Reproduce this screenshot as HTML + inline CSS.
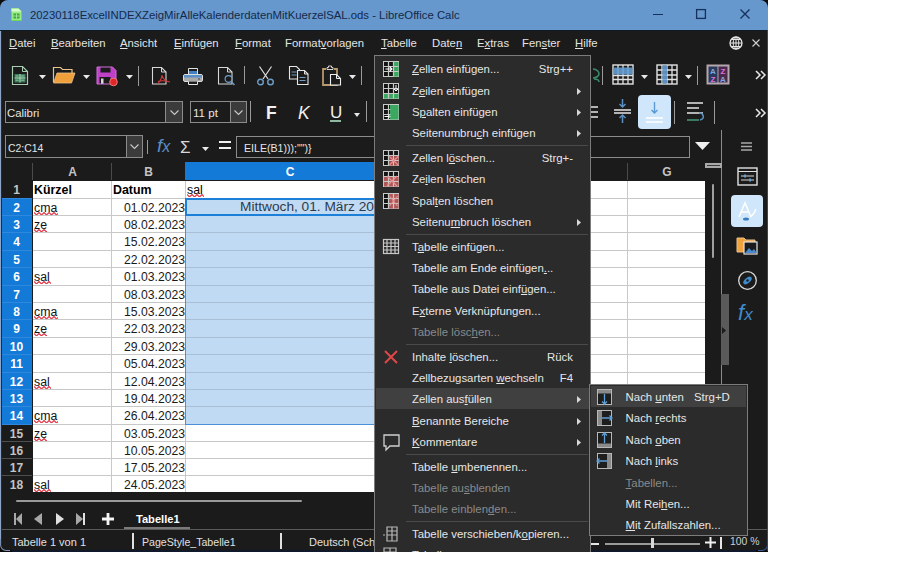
<!DOCTYPE html>
<html><head><meta charset="utf-8">
<style>
*{margin:0;padding:0;box-sizing:border-box}
html,body{width:915px;height:579px;overflow:hidden;background:#fff;font-family:"Liberation Sans",sans-serif}
.a{position:absolute}
svg.a{overflow:visible}
#win{position:absolute;left:0;top:0;width:768px;height:552px;background:#1b1b1b;overflow:hidden;border-radius:8px 8px 0 0}
.t{position:absolute;white-space:nowrap;line-height:14px}
.u{text-decoration:underline;text-underline-offset:0.5px;text-decoration-thickness:1px}
</style></head><body>

<div class="a" style="left:0px;top:0px;width:12px;height:12px;background:#0c0c0c;"></div>
<div class="a" style="left:756px;top:0px;width:12px;height:12px;background:#0c0c0c;"></div>
<div id="win">
<div class="a" style="left:0px;top:0px;width:768px;height:30px;background:#6697cd;"></div>
<svg class="a" style="left:11px;top:8px;" width="11" height="13" viewBox="0 0 11 13"><path d="M0.5 0.5h7l3 3v9h-10z" fill="#98ee84" stroke="#6ad858" stroke-width="1"/><path d="M0.5 0.5h7l3 3h-10z" fill="#d8fbd0"/><rect x="2.5" y="5.5" width="6" height="5" fill="#3aa83a"/><path d="M2.5 8h6M5.5 5.5v5" stroke="#b8f0a8" stroke-width="0.8"/></svg>
<div class="t" style="left:30px;top:8px;font-size:11.35px;color:#142a4a;">20230118ExcelINDEXZeigMirAlleKalenderdatenMitKuerzelSAL.ods - LibreOffice Calc</div>
<div class="a" style="left:653px;top:14px;width:10px;height:1.3px;background:#15305a;"></div>
<svg class="a" style="left:696px;top:9px;" width="10" height="10" viewBox="0 0 10 10"><rect x="0.6" y="0.6" width="8.8" height="8.8" fill="none" stroke="#15305a" stroke-width="1.3"/></svg>
<svg class="a" style="left:740px;top:9px;" width="10" height="10" viewBox="0 0 10 10"><path d="M0.5 0.5L9.5 9.5M9.5 0.5L0.5 9.5" stroke="#15305a" stroke-width="1.3"/></svg>
<div class="t" style="left:9px;top:36px;font-size:11.3px;color:#e4e4e4;"><span class="u">D</span>atei</div>
<div class="t" style="left:51px;top:36px;font-size:11.3px;color:#e4e4e4;"><span class="u">B</span>earbeiten</div>
<div class="t" style="left:120px;top:36px;font-size:11.3px;color:#e4e4e4;"><span class="u">A</span>nsicht</div>
<div class="t" style="left:174px;top:36px;font-size:11.3px;color:#e4e4e4;"><span class="u">E</span>infügen</div>
<div class="t" style="left:235px;top:36px;font-size:11.3px;color:#e4e4e4;"><span class="u">F</span>ormat</div>
<div class="t" style="left:285px;top:36px;font-size:11.3px;color:#e4e4e4;">Format<span class="u">v</span>orlagen</div>
<div class="t" style="left:381px;top:36px;font-size:11.3px;color:#e4e4e4;"><span class="u">T</span>abelle</div>
<div class="t" style="left:432px;top:36px;font-size:11.3px;color:#e4e4e4;">Date<span class="u">n</span></div>
<div class="t" style="left:477px;top:36px;font-size:11.3px;color:#e4e4e4;">E<span class="u">x</span>tras</div>
<div class="t" style="left:522px;top:36px;font-size:11.3px;color:#e4e4e4;">Fen<span class="u">s</span>ter</div>
<div class="t" style="left:575px;top:36px;font-size:11.3px;color:#e4e4e4;"><span class="u">H</span>ilfe</div>
<svg class="a" style="left:729px;top:36px;" width="14" height="14" viewBox="0 0 14 14"><circle cx="7" cy="7" r="6" fill="none" stroke="#e8e8e8" stroke-width="1.3"/><path d="M1 7h12M7 1v12M3 3.5h8M3 10.5h8" stroke="#e8e8e8" stroke-width="1"/><ellipse cx="7" cy="7" rx="2.8" ry="6" fill="none" stroke="#e8e8e8" stroke-width="1"/></svg>
<svg class="a" style="left:752px;top:39px;" width="8" height="8" viewBox="0 0 8 8"><path d="M0.5 0.5L7.5 7.5M7.5 0.5L0.5 7.5" stroke="#d0d0d0" stroke-width="1.1"/></svg>
<svg class="a" style="left:11px;top:65px;" width="18" height="21" viewBox="0 0 18 21"><path d="M1.5 1.5h10l5 5v13h-15z" fill="#1b1b1b" stroke="#a9cdb2" stroke-width="1.2"/><path d="M11.5 1.5v5h5" fill="none" stroke="#a9cdb2" stroke-width="1"/><rect x="3.5" y="9" width="11" height="8.5" fill="#3f7a5a"/><path d="M3.5 13h11M9 9v8.5" stroke="#a9d8b8" stroke-width="1.1"/><path d="M4.5 11h3M10 11h3.5M4.5 15.2h3M10 15.2h3.5" stroke="#8cc8a0" stroke-width="1"/></svg>
<svg class="a" style="left:39px;top:75px;" width="7" height="4" viewBox="0 0 7 4"><path d="M0 0h7l-3.5 4z" fill="#e8e8e8"/></svg>
<svg class="a" style="left:52px;top:66px;" width="24" height="18" viewBox="0 0 24 18"><path d="M1.5 16V1.5h7l2 2h9.5v4" fill="#1b1b1b" stroke="#e8c48a" stroke-width="1.2"/><path d="M1.5 17l3.5-10h18l-3.5 10z" fill="#f0a03a" stroke="#e9c08a" stroke-width="0.8"/></svg>
<svg class="a" style="left:83px;top:75px;" width="7" height="4" viewBox="0 0 7 4"><path d="M0 0h7l-3.5 4z" fill="#e8e8e8"/></svg>
<svg class="a" style="left:96px;top:66px;" width="23" height="20" viewBox="0 0 23 20"><path d="M1 1h15.5l3.5 3.5V18H1z" fill="#c040c8"/><rect x="4.5" y="1" width="10" height="5.5" fill="#1b1b1b"/><rect x="3.5" y="11" width="11" height="7" fill="#1b1b1b"/><rect x="5" y="12.5" width="2.5" height="5.5" fill="#d8d8d8"/><path d="M1 1h15.5l3.5 3.5V18H1z" fill="none" stroke="#d070d8" stroke-width="1"/><circle cx="17.5" cy="16" r="3.8" fill="#e02626" stroke="#f07a7a" stroke-width="1"/></svg>
<svg class="a" style="left:126px;top:75px;" width="7" height="4" viewBox="0 0 7 4"><path d="M0 0h7l-3.5 4z" fill="#e8e8e8"/></svg>
<div class="a" style="left:138px;top:66px;width:1px;height:20px;background:#9a9a9a;"></div>
<svg class="a" style="left:151px;top:66px;" width="21" height="19" viewBox="0 0 21 19"><path d="M1.5 1.5h9l4.5 4.5v12H1.5z" fill="none" stroke="#d8d8d8" stroke-width="1.1"/><path d="M10.5 1.5v4.5H15" fill="none" stroke="#d8d8d8" stroke-width="1"/><path d="M11 9c0 3-2 6-4 8.5M11 9c0.5 3 3 6 8 7M7 15.5c3-1 7-1 12 0.5" fill="none" stroke="#d03a3a" stroke-width="1.1"/></svg>
<svg class="a" style="left:182px;top:67px;" width="22" height="18" viewBox="0 0 22 18"><path d="M6.5 1.5h9v6h-9z" fill="#1b1b1b" stroke="#e0e0e0" stroke-width="1"/><rect x="7" y="4" width="8" height="4" fill="#3f7fc4"/><rect x="1.5" y="7.5" width="19" height="7" rx="1.5" fill="#a9a9a9" stroke="#dedede" stroke-width="1"/><rect x="2" y="8" width="18" height="2.5" fill="#5a90c8"/><path d="M6.5 14.5v3h9v-3" fill="#1b1b1b" stroke="#e6e6e6" stroke-width="1"/><rect x="16" y="11.5" width="2" height="1" fill="#404040"/></svg>
<svg class="a" style="left:217px;top:66px;" width="20" height="20" viewBox="0 0 20 20"><path d="M1.5 1.5h9l4.5 4.5v12H1.5z" fill="none" stroke="#d8d8d8" stroke-width="1.1"/><path d="M10.5 1.5v4.5H15" fill="none" stroke="#d8d8d8" stroke-width="1"/><circle cx="11.5" cy="13" r="3.4" fill="#1b1b1b" stroke="#6f9cc8" stroke-width="1.2"/><path d="M14 15.5l3.5 3.5" stroke="#6f9cc8" stroke-width="1.5"/></svg>
<div class="a" style="left:244px;top:66px;width:1px;height:18px;background:#9a9a9a;"></div>
<svg class="a" style="left:256px;top:66px;" width="20" height="20" viewBox="0 0 20 20"><path d="M3.5 0.5l8.5 12.5M15.5 0.5l-8.5 12.5" stroke="#e0e0e0" stroke-width="1.2"/><circle cx="4.5" cy="16" r="2.8" fill="none" stroke="#6e9ec8" stroke-width="1.4"/><circle cx="14.5" cy="16" r="2.8" fill="none" stroke="#6e9ec8" stroke-width="1.4"/></svg>
<svg class="a" style="left:288px;top:65px;" width="22" height="20" viewBox="0 0 22 20"><path d="M1.5 1.5h7l3 3v9.5h-10z" fill="#1b1b1b" stroke="#e6e6e6" stroke-width="1.1"/><path d="M3.5 7h5M3.5 10h5" stroke="#6e9ec8" stroke-width="1"/><path d="M9.5 5.5h7l3.5 3.5v10.5H9.5z" fill="#1b1b1b" stroke="#e6e6e6" stroke-width="1.1"/><path d="M16.5 5.5V9H20" fill="none" stroke="#e6e6e6" stroke-width="1"/><path d="M11.5 12.5h6M11.5 15.5h6" stroke="#6e9ec8" stroke-width="1"/></svg>
<svg class="a" style="left:321px;top:65px;" width="22" height="21" viewBox="0 0 22 21"><path d="M5 4H2v16h14V4h-3" fill="none" stroke="#b8986c" stroke-width="1.8"/><path d="M6 4.5h6V2.5H10.5V1h-3v1.5H6z" fill="#1b1b1b" stroke="#e6e6e6" stroke-width="0.9"/><path d="M9.5 9.5h6l4 4v6.5h-10z" fill="#1b1b1b" stroke="#eeeeee" stroke-width="1.1"/><path d="M15.5 9.5v4h4" fill="none" stroke="#eeeeee" stroke-width="1"/></svg>
<svg class="a" style="left:349px;top:75px;" width="7" height="4" viewBox="0 0 7 4"><path d="M0 0h7l-3.5 4z" fill="#e8e8e8"/></svg>
<div class="a" style="left:361px;top:66px;width:1px;height:19px;background:#9a9a9a;"></div>
<svg class="a" style="left:591px;top:66px;" width="10" height="18" viewBox="0 0 10 18"><path d="M2 3c4 0 6 3 6 5s-3 4-6 4" fill="none" stroke="#3a8a6a" stroke-width="1.6"/><path d="M3 13c3 0 5 1 5 3" fill="none" stroke="#3a8a6a" stroke-width="1.6"/></svg>
<div class="a" style="left:602px;top:66px;width:1px;height:19px;background:#9a9a9a;"></div>
<svg class="a" style="left:612px;top:64px;" width="22" height="21" viewBox="0 0 22 21"><rect x="1" y="1" width="20" height="19" fill="#1b1b1b" stroke="#e2e2e2" stroke-width="1.4"/><path d="M1 11.5h20M1 15.5h20M6 1v19M11 1v19M16 1v19" stroke="#e2e2e2" stroke-width="1.3"/><rect x="1.5" y="3.5" width="19" height="7" fill="#5b8fc2"/><path d="M6 3.5v7M11 3.5v7M16 3.5v7" stroke="#8db4da" stroke-width="0.8"/></svg>
<svg class="a" style="left:641px;top:75px;" width="7" height="4" viewBox="0 0 7 4"><path d="M0 0h7l-3.5 4z" fill="#e8e8e8"/></svg>
<svg class="a" style="left:656px;top:64px;" width="22" height="21" viewBox="0 0 22 21"><rect x="1" y="1" width="20" height="19" fill="#1b1b1b" stroke="#e2e2e2" stroke-width="1.4"/><path d="M1 6h20M1 11h20M1 15.5h20M6 1v19M11 1v19M16 1v19" stroke="#e2e2e2" stroke-width="1.3"/><rect x="6.5" y="1.5" width="4.5" height="18" fill="#5b8fc2"/><path d="M6.5 6h4.5M6.5 11h4.5M6.5 15.5h4.5" stroke="#8db4da" stroke-width="0.8"/></svg>
<svg class="a" style="left:685px;top:75px;" width="7" height="4" viewBox="0 0 7 4"><path d="M0 0h7l-3.5 4z" fill="#e8e8e8"/></svg>
<div class="a" style="left:697px;top:66px;width:1px;height:19px;background:#9a9a9a;"></div>
<svg class="a" style="left:706px;top:64px;" width="24" height="21" viewBox="0 0 24 21"><rect x="0.5" y="0.5" width="23" height="20" fill="#b6a7ae"/><rect x="2.5" y="2.5" width="9" height="16" fill="#2a3a5a"/><rect x="12.5" y="2.5" width="9" height="16" fill="#4a2a4a"/><text x="7" y="10" font-size="8" font-weight="bold" fill="#7aa8e0" text-anchor="middle" font-family="Liberation Sans">A</text><text x="7" y="18" font-size="8" font-weight="bold" fill="#e070e0" text-anchor="middle" font-family="Liberation Sans">Z</text><text x="17" y="10" font-size="8" font-weight="bold" fill="#e070e0" text-anchor="middle" font-family="Liberation Sans">Z</text><text x="17" y="18" font-size="8" font-weight="bold" fill="#7aa8e0" text-anchor="middle" font-family="Liberation Sans">A</text></svg>
<svg class="a" style="left:755px;top:70px;" width="12" height="10" viewBox="0 0 12 10"><path d="M1 1l4 4-4 4M6 1l4 4-4 4" fill="none" stroke="#e8e8e8" stroke-width="1.5"/></svg>
<div class="a" style="left:5px;top:101px;width:178px;height:22px;background:#1b1b1b;border:1.5px solid #8c8c8c"></div>
<div class="a" style="left:165px;top:102px;width:17px;height:20px;background:#3b3b3b;border-left:1px solid #8c8c8c"></div>
<svg class="a" style="left:169.5px;top:109.5px;" width="9" height="5" viewBox="0 0 9 5"><path d="M0.5 0.5l4 4 4-4" fill="none" stroke="#c8c8c8" stroke-width="1.1"/></svg>
<div class="t" style="left:7px;top:106.0px;font-size:11.4px;color:#e6e6e6;">Calibri</div>
<div class="a" style="left:190px;top:101px;width:57px;height:22px;background:#1b1b1b;border:1.5px solid #8c8c8c"></div>
<div class="a" style="left:230px;top:102px;width:16px;height:20px;background:#3b3b3b;border-left:1px solid #8c8c8c"></div>
<svg class="a" style="left:234.0px;top:109.5px;" width="9" height="5" viewBox="0 0 9 5"><path d="M0.5 0.5l4 4 4-4" fill="none" stroke="#c8c8c8" stroke-width="1.1"/></svg>
<div class="t" style="left:193px;top:105.5px;font-size:11.6px;color:#e6e6e6;">11 pt</div>
<div class="a" style="left:250px;top:101px;width:1px;height:21px;background:#9a9a9a;"></div>
<div class="t" style="left:266px;top:104px;font-size:17.5px;color:#f2f2f2;font-weight:bold;line-height:18px">F</div>
<div class="t" style="left:298px;top:104px;font-size:17.5px;color:#f2f2f2;line-height:18px;font-style:italic">K</div>
<div class="t" style="left:330px;top:104px;font-size:17px;color:#f2f2f2;line-height:18px">U</div>
<div class="a" style="left:330px;top:120px;width:11px;height:1.5px;background:#8fb8a0;"></div>
<svg class="a" style="left:354px;top:113px;" width="6" height="4" viewBox="0 0 6 4"><path d="M0 0h6l-3.0 4z" fill="#e8e8e8"/></svg>
<div class="a" style="left:366px;top:101px;width:1px;height:21px;background:#9a9a9a;"></div>
<svg class="a" style="left:586px;top:104px;" width="14" height="18" viewBox="0 0 14 18"><path d="M1 3h11M4 8h8M1 13h11" stroke="#e6e6e6" stroke-width="1.4"/></svg>
<svg class="a" style="left:613px;top:98px;" width="19" height="26" viewBox="0 0 19 26"><path d="M1 12h17M1 15h17" stroke="#e6e6e6" stroke-width="1.4"/><path d="M9.5 1v8M6.5 6l3 3 3-3M9.5 25v-8M6.5 20l3-3 3 3" fill="none" stroke="#5b8fc2" stroke-width="1.5"/></svg>
<div class="a" style="left:638px;top:95px;width:33px;height:34px;background:#cfe6fb;border-radius:4px"></div>
<svg class="a" style="left:638px;top:95px;" width="33" height="34" viewBox="0 0 33 34"><path d="M16.5 7v11M13.5 15l3 3 3-3" fill="none" stroke="#5b9ad4" stroke-width="1.4"/><path d="M8 23h17M8 27h17" stroke="#ffffff" stroke-width="1.4"/></svg>
<div class="a" style="left:674px;top:101px;width:1px;height:23px;background:#9a9a9a;"></div>
<svg class="a" style="left:686px;top:101px;" width="21" height="22" viewBox="0 0 21 22"><path d="M1 2h16M1 7h12M1 12h16" stroke="#e6e6e6" stroke-width="1.5"/><path d="M1 19h12" stroke="#4a9a7a" stroke-width="1.5"/><path d="M13 12c5 0 6 6 1 7" fill="none" stroke="#5b8fc2" stroke-width="1.5"/></svg>
<div class="a" style="left:714px;top:101px;width:1px;height:23px;background:#9a9a9a;"></div>
<svg class="a" style="left:755px;top:108px;" width="12" height="10" viewBox="0 0 12 10"><path d="M1 1l4 4-4 4M6 1l4 4-4 4" fill="none" stroke="#e8e8e8" stroke-width="1.5"/></svg>
<div class="a" style="left:5px;top:135px;width:138px;height:23px;background:#1b1b1b;border:1.5px solid #8c8c8c"></div>
<div class="a" style="left:126px;top:136px;width:16px;height:21px;background:#3b3b3b;border-left:1px solid #8c8c8c"></div>
<svg class="a" style="left:130.0px;top:144.0px;" width="9" height="5" viewBox="0 0 9 5"><path d="M0.5 0.5l4 4 4-4" fill="none" stroke="#c8c8c8" stroke-width="1.1"/></svg>
<div class="t" style="left:8px;top:141.5px;font-size:10.4px;color:#e6e6e6;">C2:C14</div>
<div class="a" style="left:147px;top:140px;width:1px;height:14px;background:#9a9a9a;"></div>
<div class="t" style="left:157px;top:139px;font-size:19px;color:#5b8fc4;font-family:"Liberation Serif",serif;line-height:20px"><i>f</i><i style="font-size:16px">x</i></div>
<div class="t" style="left:180px;top:141px;font-size:17px;color:#d8d8d8;font-family:"Liberation Serif",serif;line-height:20px">Σ</div>
<svg class="a" style="left:202px;top:147px;" width="7" height="4" viewBox="0 0 7 4"><path d="M0 0h7l-3.5 4z" fill="#e8e8e8"/></svg>
<div class="a" style="left:219px;top:141px;width:12px;height:2px;background:#f0f0f0;"></div>
<div class="a" style="left:219px;top:147px;width:12px;height:2px;background:#f0f0f0;"></div>
<div class="a" style="left:236px;top:136px;width:454px;height:22px;background:#1b1b1b;border:1.5px solid #8c8c8c"></div>
<div class="t" style="left:244px;top:141px;font-size:10.6px;color:#e6e6e6;">EILE(B1)));"")}</div>
<svg class="a" style="left:695px;top:142px;" width="15" height="8" viewBox="0 0 15 8"><path d="M0 0h15l-7.5 8z" fill="#f0f0f0"/></svg>
<div class="a" style="left:0px;top:162px;width:722px;height:18px;background:#1b1b1b;"></div>
<div class="a" style="left:185px;top:162px;width:212px;height:18px;background:#147ad8;"></div>
<div class="a" style="left:32px;top:163px;width:1px;height:17px;background:#4a4a4a;"></div>
<div class="a" style="left:111px;top:163px;width:1px;height:17px;background:#4a4a4a;"></div>
<div class="a" style="left:627px;top:163px;width:1px;height:17px;background:#4a4a4a;"></div>
<div class="t" style="left:52.5px;top:165px;width:40px;text-align:center;font-size:12px;color:#c4c4c4;font-weight:bold">A</div>
<div class="t" style="left:128.5px;top:165px;width:40px;text-align:center;font-size:12px;color:#c4c4c4;font-weight:bold">B</div>
<div class="t" style="left:647px;top:165px;width:40px;text-align:center;font-size:12px;color:#c4c4c4;font-weight:bold">G</div>
<div class="t" style="left:270px;top:165px;width:40px;text-align:center;font-size:12px;color:#ffffff;font-weight:bold">C</div>
<div class="a" style="left:33px;top:181px;width:672px;height:311px;background:#ffffff;"></div>
<div class="a" style="left:185px;top:199px;width:212px;height:226px;background:#c0daf3;"></div>
<div class="a" style="left:0px;top:181px;width:32px;height:18px;background:#1b1b1b;"></div>
<div class="t" style="left:0px;top:183px;width:33px;text-align:center;font-size:12px;color:#c4c4c4;font-weight:bold;">1</div>
<div class="a" style="left:0px;top:199px;width:32px;height:17px;background:#147ad8;"></div>
<div class="a" style="left:0px;top:198px;width:32px;height:1px;background:#2f88dc;"></div>
<div class="t" style="left:0px;top:201px;width:33px;text-align:center;font-size:12px;color:#ffffff;font-weight:bold;">2</div>
<div class="a" style="left:0px;top:216px;width:32px;height:17px;background:#147ad8;"></div>
<div class="a" style="left:0px;top:215px;width:32px;height:1px;background:#2f88dc;"></div>
<div class="t" style="left:0px;top:218px;width:33px;text-align:center;font-size:12px;color:#ffffff;font-weight:bold;">3</div>
<div class="a" style="left:0px;top:233px;width:32px;height:18px;background:#147ad8;"></div>
<div class="a" style="left:0px;top:232px;width:32px;height:1px;background:#2f88dc;"></div>
<div class="t" style="left:0px;top:235px;width:33px;text-align:center;font-size:12px;color:#ffffff;font-weight:bold;">4</div>
<div class="a" style="left:0px;top:251px;width:32px;height:17px;background:#147ad8;"></div>
<div class="a" style="left:0px;top:250px;width:32px;height:1px;background:#2f88dc;"></div>
<div class="t" style="left:0px;top:253px;width:33px;text-align:center;font-size:12px;color:#ffffff;font-weight:bold;">5</div>
<div class="a" style="left:0px;top:268px;width:32px;height:18px;background:#147ad8;"></div>
<div class="a" style="left:0px;top:267px;width:32px;height:1px;background:#2f88dc;"></div>
<div class="t" style="left:0px;top:270px;width:33px;text-align:center;font-size:12px;color:#ffffff;font-weight:bold;">6</div>
<div class="a" style="left:0px;top:286px;width:32px;height:17px;background:#147ad8;"></div>
<div class="a" style="left:0px;top:285px;width:32px;height:1px;background:#2f88dc;"></div>
<div class="t" style="left:0px;top:288px;width:33px;text-align:center;font-size:12px;color:#ffffff;font-weight:bold;">7</div>
<div class="a" style="left:0px;top:303px;width:32px;height:17px;background:#147ad8;"></div>
<div class="a" style="left:0px;top:302px;width:32px;height:1px;background:#2f88dc;"></div>
<div class="t" style="left:0px;top:305px;width:33px;text-align:center;font-size:12px;color:#ffffff;font-weight:bold;">8</div>
<div class="a" style="left:0px;top:320px;width:32px;height:18px;background:#147ad8;"></div>
<div class="a" style="left:0px;top:319px;width:32px;height:1px;background:#2f88dc;"></div>
<div class="t" style="left:0px;top:322px;width:33px;text-align:center;font-size:12px;color:#ffffff;font-weight:bold;">9</div>
<div class="a" style="left:0px;top:338px;width:32px;height:17px;background:#147ad8;"></div>
<div class="a" style="left:0px;top:337px;width:32px;height:1px;background:#2f88dc;"></div>
<div class="t" style="left:0px;top:340px;width:33px;text-align:center;font-size:12px;color:#ffffff;font-weight:bold;">10</div>
<div class="a" style="left:0px;top:355px;width:32px;height:18px;background:#147ad8;"></div>
<div class="a" style="left:0px;top:354px;width:32px;height:1px;background:#2f88dc;"></div>
<div class="t" style="left:0px;top:357px;width:33px;text-align:center;font-size:12px;color:#ffffff;font-weight:bold;">11</div>
<div class="a" style="left:0px;top:373px;width:32px;height:17px;background:#147ad8;"></div>
<div class="a" style="left:0px;top:372px;width:32px;height:1px;background:#2f88dc;"></div>
<div class="t" style="left:0px;top:375px;width:33px;text-align:center;font-size:12px;color:#ffffff;font-weight:bold;">12</div>
<div class="a" style="left:0px;top:390px;width:32px;height:17px;background:#147ad8;"></div>
<div class="a" style="left:0px;top:389px;width:32px;height:1px;background:#2f88dc;"></div>
<div class="t" style="left:0px;top:392px;width:33px;text-align:center;font-size:12px;color:#ffffff;font-weight:bold;">13</div>
<div class="a" style="left:0px;top:407px;width:32px;height:18px;background:#147ad8;"></div>
<div class="a" style="left:0px;top:406px;width:32px;height:1px;background:#2f88dc;"></div>
<div class="t" style="left:0px;top:409px;width:33px;text-align:center;font-size:12px;color:#ffffff;font-weight:bold;">14</div>
<div class="a" style="left:0px;top:425px;width:32px;height:17px;background:#1b1b1b;"></div>
<div class="a" style="left:0px;top:424px;width:32px;height:1px;background:#2f88dc;"></div>
<div class="t" style="left:0px;top:427px;width:33px;text-align:center;font-size:12px;color:#c4c4c4;font-weight:bold;">15</div>
<div class="a" style="left:0px;top:442px;width:32px;height:17px;background:#1b1b1b;"></div>
<div class="a" style="left:0px;top:441px;width:32px;height:1px;background:#4e4e4e;"></div>
<div class="t" style="left:0px;top:444px;width:33px;text-align:center;font-size:12px;color:#c4c4c4;font-weight:bold;">16</div>
<div class="a" style="left:0px;top:459px;width:32px;height:17px;background:#1b1b1b;"></div>
<div class="a" style="left:0px;top:458px;width:32px;height:1px;background:#4e4e4e;"></div>
<div class="t" style="left:0px;top:461px;width:33px;text-align:center;font-size:12px;color:#c4c4c4;font-weight:bold;">17</div>
<div class="a" style="left:0px;top:476px;width:32px;height:17px;background:#1b1b1b;"></div>
<div class="a" style="left:0px;top:475px;width:32px;height:1px;background:#4e4e4e;"></div>
<div class="t" style="left:0px;top:478px;width:33px;text-align:center;font-size:12px;color:#c4c4c4;font-weight:bold;">18</div>
<div class="a" style="left:33px;top:198px;width:672px;height:1px;background:#c8c8c8;"></div>
<div class="a" style="left:33px;top:215px;width:672px;height:1px;background:#c8c8c8;"></div>
<div class="a" style="left:185px;top:215px;width:212px;height:1px;background:#a9bfd6;"></div>
<div class="a" style="left:33px;top:232px;width:672px;height:1px;background:#c8c8c8;"></div>
<div class="a" style="left:185px;top:232px;width:212px;height:1px;background:#a9bfd6;"></div>
<div class="a" style="left:33px;top:250px;width:672px;height:1px;background:#c8c8c8;"></div>
<div class="a" style="left:185px;top:250px;width:212px;height:1px;background:#a9bfd6;"></div>
<div class="a" style="left:33px;top:267px;width:672px;height:1px;background:#c8c8c8;"></div>
<div class="a" style="left:185px;top:267px;width:212px;height:1px;background:#a9bfd6;"></div>
<div class="a" style="left:33px;top:285px;width:672px;height:1px;background:#c8c8c8;"></div>
<div class="a" style="left:185px;top:285px;width:212px;height:1px;background:#a9bfd6;"></div>
<div class="a" style="left:33px;top:302px;width:672px;height:1px;background:#c8c8c8;"></div>
<div class="a" style="left:185px;top:302px;width:212px;height:1px;background:#a9bfd6;"></div>
<div class="a" style="left:33px;top:319px;width:672px;height:1px;background:#c8c8c8;"></div>
<div class="a" style="left:185px;top:319px;width:212px;height:1px;background:#a9bfd6;"></div>
<div class="a" style="left:33px;top:337px;width:672px;height:1px;background:#c8c8c8;"></div>
<div class="a" style="left:185px;top:337px;width:212px;height:1px;background:#a9bfd6;"></div>
<div class="a" style="left:33px;top:354px;width:672px;height:1px;background:#c8c8c8;"></div>
<div class="a" style="left:185px;top:354px;width:212px;height:1px;background:#a9bfd6;"></div>
<div class="a" style="left:33px;top:372px;width:672px;height:1px;background:#c8c8c8;"></div>
<div class="a" style="left:185px;top:372px;width:212px;height:1px;background:#a9bfd6;"></div>
<div class="a" style="left:33px;top:389px;width:672px;height:1px;background:#c8c8c8;"></div>
<div class="a" style="left:185px;top:389px;width:212px;height:1px;background:#a9bfd6;"></div>
<div class="a" style="left:33px;top:406px;width:672px;height:1px;background:#c8c8c8;"></div>
<div class="a" style="left:185px;top:406px;width:212px;height:1px;background:#a9bfd6;"></div>
<div class="a" style="left:33px;top:424px;width:672px;height:1px;background:#c8c8c8;"></div>
<div class="a" style="left:185px;top:424px;width:212px;height:1px;background:#a9bfd6;"></div>
<div class="a" style="left:33px;top:441px;width:672px;height:1px;background:#c8c8c8;"></div>
<div class="a" style="left:33px;top:458px;width:672px;height:1px;background:#c8c8c8;"></div>
<div class="a" style="left:33px;top:475px;width:672px;height:1px;background:#c8c8c8;"></div>
<div class="a" style="left:111px;top:181px;width:1px;height:311px;background:#c8c8c8;"></div>
<div class="a" style="left:185px;top:181px;width:1px;height:311px;background:#c8c8c8;"></div>
<div class="a" style="left:627px;top:181px;width:1px;height:311px;background:#c8c8c8;"></div>
<div class="a" style="left:185px;top:198px;width:1px;height:226px;background:#4a90d8;"></div>
<div class="a" style="left:185px;top:424px;width:212px;height:1px;background:#4a90d8;"></div>
<div class="a" style="left:185px;top:198px;width:300px;height:18px;background:transparent;border:2px solid #1c7fd8"></div>
<div class="t" style="left:34px;top:182.5px;font-size:12.4px;color:#000000;font-weight:bold;">Kürzel</div>
<div class="t" style="left:113px;top:182.5px;font-size:12.4px;color:#000000;font-weight:bold;">Datum</div>
<div class="t" style="left:187px;top:182.5px;font-size:12.3px;color:#000000;">sal</div>
<svg class="a" style="left:187px;top:193.5px;overflow:hidden" width="17" height="3.5" viewBox="0 0 17 3.5"><path d="M0 0.5 L0.0 0.5 L2.5 3.0 L5.0 0.5 L7.5 3.0 L10.0 0.5 L12.5 3.0 L15.0 0.5 L17.5 3.0" fill="none" stroke="#e23a48" stroke-width="1.2"/></svg>
<div class="t" style="left:34px;top:200.5px;font-size:12.3px;color:#111111;">cma</div>
<svg class="a" style="left:34px;top:211.5px;overflow:hidden" width="24" height="3.5" viewBox="0 0 24 3.5"><path d="M0 0.5 L0.0 0.5 L2.5 3.0 L5.0 0.5 L7.5 3.0 L10.0 0.5 L12.5 3.0 L15.0 0.5 L17.5 3.0 L20.0 0.5 L22.5 3.0 L25.0 0.5" fill="none" stroke="#e23a48" stroke-width="1.2"/></svg>
<div class="t" style="left:100px;top:200.5px;width:85px;text-align:right;font-size:12.2px;color:#1a1a1a">01.02.2023</div>
<div class="t" style="left:34px;top:217.5px;font-size:12.3px;color:#111111;">ze</div>
<svg class="a" style="left:34px;top:228.5px;overflow:hidden" width="13" height="3.5" viewBox="0 0 13 3.5"><path d="M0 0.5 L0.0 0.5 L2.5 3.0 L5.0 0.5 L7.5 3.0 L10.0 0.5 L12.5 3.0 L15.0 0.5" fill="none" stroke="#e23a48" stroke-width="1.2"/></svg>
<div class="t" style="left:100px;top:217.5px;width:85px;text-align:right;font-size:12.2px;color:#1a1a1a">08.02.2023</div>
<div class="t" style="left:100px;top:234.5px;width:85px;text-align:right;font-size:12.2px;color:#1a1a1a">15.02.2023</div>
<div class="t" style="left:100px;top:252.5px;width:85px;text-align:right;font-size:12.2px;color:#1a1a1a">22.02.2023</div>
<div class="t" style="left:34px;top:269.5px;font-size:12.3px;color:#111111;">sal</div>
<svg class="a" style="left:34px;top:280.5px;overflow:hidden" width="17" height="3.5" viewBox="0 0 17 3.5"><path d="M0 0.5 L0.0 0.5 L2.5 3.0 L5.0 0.5 L7.5 3.0 L10.0 0.5 L12.5 3.0 L15.0 0.5 L17.5 3.0" fill="none" stroke="#e23a48" stroke-width="1.2"/></svg>
<div class="t" style="left:100px;top:269.5px;width:85px;text-align:right;font-size:12.2px;color:#1a1a1a">01.03.2023</div>
<div class="t" style="left:100px;top:287.5px;width:85px;text-align:right;font-size:12.2px;color:#1a1a1a">08.03.2023</div>
<div class="t" style="left:34px;top:304.5px;font-size:12.3px;color:#111111;">cma</div>
<svg class="a" style="left:34px;top:315.5px;overflow:hidden" width="24" height="3.5" viewBox="0 0 24 3.5"><path d="M0 0.5 L0.0 0.5 L2.5 3.0 L5.0 0.5 L7.5 3.0 L10.0 0.5 L12.5 3.0 L15.0 0.5 L17.5 3.0 L20.0 0.5 L22.5 3.0 L25.0 0.5" fill="none" stroke="#e23a48" stroke-width="1.2"/></svg>
<div class="t" style="left:100px;top:304.5px;width:85px;text-align:right;font-size:12.2px;color:#1a1a1a">15.03.2023</div>
<div class="t" style="left:34px;top:321.5px;font-size:12.3px;color:#111111;">ze</div>
<svg class="a" style="left:34px;top:332.5px;overflow:hidden" width="13" height="3.5" viewBox="0 0 13 3.5"><path d="M0 0.5 L0.0 0.5 L2.5 3.0 L5.0 0.5 L7.5 3.0 L10.0 0.5 L12.5 3.0 L15.0 0.5" fill="none" stroke="#e23a48" stroke-width="1.2"/></svg>
<div class="t" style="left:100px;top:321.5px;width:85px;text-align:right;font-size:12.2px;color:#1a1a1a">22.03.2023</div>
<div class="t" style="left:100px;top:339.5px;width:85px;text-align:right;font-size:12.2px;color:#1a1a1a">29.03.2023</div>
<div class="t" style="left:100px;top:356.5px;width:85px;text-align:right;font-size:12.2px;color:#1a1a1a">05.04.2023</div>
<div class="t" style="left:34px;top:374.5px;font-size:12.3px;color:#111111;">sal</div>
<svg class="a" style="left:34px;top:385.5px;overflow:hidden" width="17" height="3.5" viewBox="0 0 17 3.5"><path d="M0 0.5 L0.0 0.5 L2.5 3.0 L5.0 0.5 L7.5 3.0 L10.0 0.5 L12.5 3.0 L15.0 0.5 L17.5 3.0" fill="none" stroke="#e23a48" stroke-width="1.2"/></svg>
<div class="t" style="left:100px;top:374.5px;width:85px;text-align:right;font-size:12.2px;color:#1a1a1a">12.04.2023</div>
<div class="t" style="left:100px;top:391.5px;width:85px;text-align:right;font-size:12.2px;color:#1a1a1a">19.04.2023</div>
<div class="t" style="left:34px;top:408.5px;font-size:12.3px;color:#111111;">cma</div>
<svg class="a" style="left:34px;top:419.5px;overflow:hidden" width="24" height="3.5" viewBox="0 0 24 3.5"><path d="M0 0.5 L0.0 0.5 L2.5 3.0 L5.0 0.5 L7.5 3.0 L10.0 0.5 L12.5 3.0 L15.0 0.5 L17.5 3.0 L20.0 0.5 L22.5 3.0 L25.0 0.5" fill="none" stroke="#e23a48" stroke-width="1.2"/></svg>
<div class="t" style="left:100px;top:408.5px;width:85px;text-align:right;font-size:12.2px;color:#1a1a1a">26.04.2023</div>
<div class="t" style="left:34px;top:426.5px;font-size:12.3px;color:#111111;">ze</div>
<svg class="a" style="left:34px;top:437.5px;overflow:hidden" width="13" height="3.5" viewBox="0 0 13 3.5"><path d="M0 0.5 L0.0 0.5 L2.5 3.0 L5.0 0.5 L7.5 3.0 L10.0 0.5 L12.5 3.0 L15.0 0.5" fill="none" stroke="#e23a48" stroke-width="1.2"/></svg>
<div class="t" style="left:100px;top:426.5px;width:85px;text-align:right;font-size:12.2px;color:#1a1a1a">03.05.2023</div>
<div class="t" style="left:100px;top:443.5px;width:85px;text-align:right;font-size:12.2px;color:#1a1a1a">10.05.2023</div>
<div class="t" style="left:100px;top:460.5px;width:85px;text-align:right;font-size:12.2px;color:#1a1a1a">17.05.2023</div>
<div class="t" style="left:34px;top:477.5px;font-size:12.3px;color:#111111;">sal</div>
<svg class="a" style="left:34px;top:488.5px;overflow:hidden" width="17" height="3.5" viewBox="0 0 17 3.5"><path d="M0 0.5 L0.0 0.5 L2.5 3.0 L5.0 0.5 L7.5 3.0 L10.0 0.5 L12.5 3.0 L15.0 0.5 L17.5 3.0" fill="none" stroke="#e23a48" stroke-width="1.2"/></svg>
<div class="t" style="left:100px;top:477.5px;width:85px;text-align:right;font-size:12.2px;color:#1a1a1a">24.05.2023</div>
<div class="t" style="left:240px;top:199.5px;font-size:13.7px;color:#2b3a4e;">Mittwoch, 01. März 2023</div>
<div class="a" style="left:705px;top:162px;width:17px;height:330px;background:#1b1b1b;"></div>
<div class="a" style="left:721px;top:130px;width:1px;height:421px;background:#8a8a8a;"></div>
<div class="a" style="left:722px;top:130px;width:46px;height:421px;background:#1b1b1b;"></div>
<div class="a" style="left:712px;top:184px;width:2px;height:74px;background:#a0a0a0;border-radius:1px"></div>
<div class="a" style="left:705px;top:163px;width:17px;height:5px;background:#a8a8a8;"></div>
<div class="a" style="left:707px;top:165px;width:13px;height:1px;background:#3a3a3a;"></div>
<svg class="a" style="left:741px;top:142px;" width="11" height="9" viewBox="0 0 11 9"><path d="M0 1h11M0 4.5h11M0 8h11" stroke="#a8a8a8" stroke-width="1.5"/></svg>
<svg class="a" style="left:737px;top:167px;" width="21" height="19" viewBox="0 0 21 19"><rect x="1" y="1" width="19" height="17" fill="#1b1b1b" stroke="#e0e0e0" stroke-width="1.4"/><path d="M1 4.5h19" stroke="#e0e0e0" stroke-width="1.2"/><path d="M4 9h13M4 13h13" stroke="#d8d8d8" stroke-width="1.1"/><path d="M8 7.5v3M13 11.5v3" stroke="#5f9fd6" stroke-width="2"/></svg>
<div class="a" style="left:731px;top:195px;width:32px;height:32px;background:#cfe6fb;border-radius:4px"></div>
<svg class="a" style="left:731px;top:195px;" width="32" height="32" viewBox="0 0 32 32"><path d="M8 22l6-14 6 14M10.5 17h7" fill="none" stroke="#ffffff" stroke-width="1.5"/><path d="M19 22c3-2 5-5 6-8" fill="none" stroke="#ffffff" stroke-width="1.3"/><ellipse cx="15" cy="24" rx="3" ry="1.6" fill="#3a7ac0"/></svg>
<svg class="a" style="left:736px;top:235px;" width="22" height="20" viewBox="0 0 22 20"><path d="M1 3h7l2 2h9v12H1z" fill="#f0a23c" stroke="#e9c08a" stroke-width="1"/><rect x="8" y="7" width="13" height="12" fill="#1b1b1b" stroke="#e6e6e6" stroke-width="1.2"/><path d="M9 18l4-5 3 3 2-2 3 4z" fill="#4a8ad0"/></svg>
<svg class="a" style="left:737px;top:270px;" width="21" height="21" viewBox="0 0 21 21"><circle cx="10.5" cy="10.5" r="8.8" fill="none" stroke="#d8d8d8" stroke-width="1.3"/><ellipse cx="10.5" cy="10.5" rx="5" ry="2.6" transform="rotate(-40 10.5 10.5)" fill="#3f8ccc"/><circle cx="10.5" cy="10.5" r="1.2" fill="#1b1b1b"/></svg>
<div class="t" style="left:738px;top:306px;font-size:22px;color:#3f8ccc;font-family:"Liberation Serif",serif;line-height:22px"><i>f</i><i style="font-size:17px">x</i></div>
<div class="a" style="left:721px;top:294px;width:8px;height:71px;background:#5a5a5a;"></div>
<svg class="a" style="left:722px;top:327px;" width="4" height="7" viewBox="0 0 4 7"><path d="M0 0l4 3.5-4 3.5z" fill="#1b1b1b"/></svg>
<div class="a" style="left:0px;top:492px;width:705px;height:38px;background:#1b1b1b;"></div>
<div class="a" style="left:16px;top:500px;width:286px;height:2px;background:#9a9a9a;border-radius:1px"></div>
<svg class="a" style="left:14px;top:513px;" width="8" height="12" viewBox="0 0 8 12"><path d="M0 0h2v12H0z" fill="#a8a8a8"/><path d="M8 0v12L2 6z" fill="#a8a8a8"/></svg>
<svg class="a" style="left:34px;top:513px;" width="8" height="12" viewBox="0 0 8 12"><path d="M8 0v12L0 6z" fill="#a8a8a8"/></svg>
<svg class="a" style="left:56px;top:513px;" width="8" height="12" viewBox="0 0 8 12"><path d="M0 0v12l8-6z" fill="#e0e0e0"/></svg>
<svg class="a" style="left:76px;top:513px;" width="9" height="12" viewBox="0 0 9 12"><path d="M0 0v12l7-6z" fill="#a8a8a8"/><path d="M7 0h2v12H7z" fill="#e0e0e0"/></svg>
<svg class="a" style="left:101px;top:512px;" width="14" height="14" viewBox="0 0 14 14"><path d="M7 1v12M1 7h12" stroke="#f4f4f4" stroke-width="2.8"/></svg>
<div class="t" style="left:136px;top:512px;font-size:11.1px;color:#ffffff;font-weight:bold;">Tabelle1</div>
<div class="a" style="left:124px;top:527px;width:66px;height:3px;background:#7a7a7a;"></div>
<div class="a" style="left:0px;top:529px;width:768px;height:1px;background:#6a6a6a;"></div>
<div class="a" style="left:0px;top:530px;width:768px;height:22px;background:#1b1b1b;"></div>
<div class="a" style="left:0px;top:550px;width:768px;height:2px;background:#10182c;"></div>
<div class="a" style="left:0px;top:529px;width:768px;height:1px;background:#5a5a5a;"></div>
<div class="t" style="left:12px;top:535px;font-size:11px;color:#e0e0e0;">Tabelle 1 von 1</div>
<div class="a" style="left:132px;top:533px;width:2px;height:16px;background:#e0e0e0;"></div>
<div class="t" style="left:142px;top:535px;font-size:10.6px;color:#e0e0e0;">PageStyle_Tabelle1</div>
<div class="a" style="left:280px;top:533px;width:2px;height:16px;background:#e0e0e0;"></div>
<div class="t" style="left:309px;top:535px;font-size:11px;color:#e0e0e0;">Deutsch (Schweiz)</div>
<div class="a" style="left:590px;top:543px;width:9px;height:2px;background:#e6e6e6;"></div>
<div class="a" style="left:605px;top:543px;width:95px;height:1.5px;background:#9a9a9a;"></div>
<div class="a" style="left:651px;top:538px;width:3px;height:10px;background:#d8d8d8;"></div>
<svg class="a" style="left:705px;top:537px;" width="11" height="11" viewBox="0 0 11 11"><path d="M5.5 0v11M0 5.5h11" stroke="#f0f0f0" stroke-width="2"/></svg>
<div class="a" style="left:720px;top:537px;width:2px;height:12px;background:#e6e6e6;"></div>
<div class="t" style="left:730px;top:535px;font-size:10.4px;color:#cfcfcf;">100 %</div>
<div class="a" style="left:0px;top:30px;width:1px;height:513px;background:#8fa5c8;"></div>
<div class="a" style="left:1px;top:30px;width:1px;height:513px;background:#1c2c48;"></div>
<svg class="a" style="left:0px;top:539px;" width="12" height="13" viewBox="0 0 12 13"><path d="M0 0h1.5v6a5 5 0 0 0 5 5H12v2H0z" fill="#0c0c0c"/><path d="M0.6 0v6a5.5 5.5 0 0 0 5.5 5.5H10" fill="none" stroke="#8096b8" stroke-width="1.1"/></svg>
<svg class="a" style="left:756px;top:539px;" width="12" height="13" viewBox="0 0 12 13"><path d="M12 0h-1.5v6a5 5 0 0 1 -5 5H0v2H12z" fill="#0c0c0c"/><path d="M11.4 0v6a5.5 5.5 0 0 1 -5.5 5.5H2" fill="none" stroke="#3a5a90" stroke-width="1.1"/></svg>
<div class="a" style="left:0px;top:30px;width:768px;height:1px;background:#0e1a24;"></div>
<div class="a" style="left:767px;top:30px;width:1px;height:521px;background:#2a4a70;"></div>
<div class="a" style="left:374px;top:55px;width:217px;height:500px;background:#2b2b2b;border:1px solid #7c7c7c;border-bottom:none"></div>
<div class="t" style="left:412px;top:62px;font-size:11.4px;color:#e6e6e6;"><span class="u">Z</span>ellen einfügen...</div>
<div class="t" style="left:511px;top:62px;width:62px;text-align:right;font-size:11.4px;color:#e6e6e6">Strg++</div>
<svg class="a" style="left:383px;top:61px;" width="16" height="16" viewBox="0 0 16 16"><rect x="0.5" y="0.5" width="15" height="15" fill="#141414" stroke="#c8c8c8" stroke-width="1"/><rect x="10" y="1" width="5.5" height="14.5" fill="#3aa860"/><path d="M0.5 5.5h15M0.5 10.5h15M5.5 0.5v15M10.5 0.5v15" stroke="#c8c8c8" stroke-width="1.2"/><path d="M2.5 8h6M6.5 5.5L9 8l-2.5 2.5" fill="none" stroke="#ffffff" stroke-width="1.1"/></svg>
<div class="t" style="left:412px;top:84px;font-size:11.4px;color:#e6e6e6;">Z<span class="u">e</span>ilen einfügen</div>
<svg class="a" style="left:577px;top:88px;" width="4" height="7" viewBox="0 0 4 7"><path d="M0 0l4 3.5-4 3.5z" fill="#d8d8d8"/></svg>
<svg class="a" style="left:383px;top:83px;" width="16" height="16" viewBox="0 0 16 16"><rect x="0.5" y="0.5" width="15" height="15" fill="#141414" stroke="#c8c8c8" stroke-width="1"/><rect x="1" y="10" width="14.5" height="5.5" fill="#3aa860"/><path d="M0.5 5.5h15M0.5 10.5h15M5.5 0.5v15M10.5 0.5v15" stroke="#c8c8c8" stroke-width="1.2"/><path d="M13 2v6M11 6l2 2 2-2" fill="none" stroke="#ffffff" stroke-width="1"/></svg>
<div class="t" style="left:412px;top:105px;font-size:11.4px;color:#e6e6e6;">S<span class="u">p</span>alten einfügen</div>
<svg class="a" style="left:577px;top:109px;" width="4" height="7" viewBox="0 0 4 7"><path d="M0 0l4 3.5-4 3.5z" fill="#d8d8d8"/></svg>
<svg class="a" style="left:383px;top:104px;" width="16" height="16" viewBox="0 0 16 16"><rect x="0.5" y="0.5" width="15" height="15" fill="#141414" stroke="#c8c8c8" stroke-width="1"/><rect x="7" y="1" width="8.5" height="14.5" fill="#3aa860"/><path d="M0.5 5.5h7M0.5 10.5h7M5.5 0.5v15" stroke="#c8c8c8" stroke-width="1.2"/><path d="M1.5 12.5h5M5 10.5l2 2-2 2" fill="none" stroke="#ffffff" stroke-width="1"/></svg>
<div class="t" style="left:412px;top:126px;font-size:11.4px;color:#e6e6e6;">Seitenumbru<span class="u">c</span>h einfügen</div>
<svg class="a" style="left:577px;top:130px;" width="4" height="7" viewBox="0 0 4 7"><path d="M0 0l4 3.5-4 3.5z" fill="#d8d8d8"/></svg>
<div class="a" style="left:406px;top:145px;width:182px;height:1px;background:#4a4a4a;"></div>
<div class="t" style="left:412px;top:151px;font-size:11.4px;color:#e6e6e6;">Zellen l<span class="u">ö</span>schen...</div>
<div class="t" style="left:511px;top:151px;width:62px;text-align:right;font-size:11.4px;color:#e6e6e6">Strg+-</div>
<svg class="a" style="left:383px;top:150px;" width="16" height="16" viewBox="0 0 16 16"><rect x="0.5" y="0.5" width="15" height="15" fill="#141414" stroke="#c8c8c8" stroke-width="1"/><rect x="6" y="6" width="9.5" height="9.5" fill="#a84848"/><path d="M0.5 5.5h15M0.5 10.5h15M5.5 0.5v15M10.5 0.5v15" stroke="#c8c8c8" stroke-width="1.2"/><path d="M6.5 6.5l8.5 8.5M15 6.5l-8.5 8.5" stroke="#e89090" stroke-width="1.3"/></svg>
<div class="t" style="left:412px;top:172px;font-size:11.4px;color:#e6e6e6;">Ze<span class="u">i</span>len löschen</div>
<svg class="a" style="left:383px;top:171px;" width="16" height="16" viewBox="0 0 16 16"><rect x="0.5" y="0.5" width="15" height="15" fill="#141414" stroke="#c8c8c8" stroke-width="1"/><rect x="1" y="6" width="14.5" height="9.5" fill="#b05858"/><path d="M0.5 5.5h15M0.5 10.5h15M5.5 0.5v15M10.5 0.5v15" stroke="#c8c8c8" stroke-width="1.2"/><path d="M4 5l10 10M14 5L4 15" stroke="#e89090" stroke-width="1.2"/></svg>
<div class="t" style="left:412px;top:194px;font-size:11.4px;color:#e6e6e6;">Spal<span class="u">t</span>en löschen</div>
<svg class="a" style="left:383px;top:193px;" width="16" height="16" viewBox="0 0 16 16"><rect x="0.5" y="0.5" width="15" height="15" fill="#141414" stroke="#c8c8c8" stroke-width="1"/><rect x="6" y="1" width="9.5" height="14.5" fill="#b05858"/><path d="M0.5 5.5h15M0.5 10.5h15M5.5 0.5v15M10.5 0.5v15" stroke="#c8c8c8" stroke-width="1.2"/><path d="M6.5 3l8 10M14.5 3l-8 10" stroke="#e89090" stroke-width="1.2"/></svg>
<div class="t" style="left:412px;top:215px;font-size:11.4px;color:#e6e6e6;">Seitenu<span class="u">m</span>bruch löschen</div>
<svg class="a" style="left:577px;top:219px;" width="4" height="7" viewBox="0 0 4 7"><path d="M0 0l4 3.5-4 3.5z" fill="#d8d8d8"/></svg>
<div class="a" style="left:406px;top:234px;width:182px;height:1px;background:#4a4a4a;"></div>
<div class="t" style="left:412px;top:240px;font-size:11.4px;color:#e6e6e6;">T<span class="u">a</span>belle einfügen...</div>
<svg class="a" style="left:383px;top:239px;" width="16" height="16" viewBox="0 0 16 16"><rect x="0.5" y="0.5" width="15" height="14" fill="none" stroke="#c8c8c8" stroke-width="1.2"/><path d="M0.5 4h15M0.5 7.5h15M0.5 11h15M4 0.5v14M8 0.5v14M12 0.5v14" stroke="#c8c8c8" stroke-width="1.2"/></svg>
<div class="t" style="left:412px;top:261px;font-size:11.4px;color:#e6e6e6;">Tabelle am Ende einfügen<span class="u">.</span>..</div>
<div class="t" style="left:412px;top:282px;font-size:11.4px;color:#e6e6e6;">Tabelle aus Datei einf<span class="u">ü</span>gen...</div>
<div class="t" style="left:412px;top:304px;font-size:11.4px;color:#e6e6e6;">E<span class="u">x</span>terne Verknüpfungen...</div>
<div class="t" style="left:412px;top:325px;font-size:11.4px;color:#8a8a8a;">Tabelle lösc<span class="u">h</span>en...</div>
<div class="a" style="left:406px;top:344px;width:182px;height:1px;background:#4a4a4a;"></div>
<div class="t" style="left:412px;top:350px;font-size:11.4px;color:#e6e6e6;">Inhalte <span class="u">l</span>öschen...</div>
<div class="t" style="left:511px;top:350px;width:62px;text-align:right;font-size:11.4px;color:#e6e6e6">Rück</div>
<svg class="a" style="left:383px;top:349px;" width="16" height="16" viewBox="0 0 16 16"><path d="M2 2l12 12M14 2L2 14" stroke="#e04848" stroke-width="2"/></svg>
<div class="t" style="left:412px;top:371px;font-size:11.4px;color:#e6e6e6;">Zellbezugsarten <span class="u">w</span>echseln</div>
<div class="t" style="left:511px;top:371px;width:62px;text-align:right;font-size:11.4px;color:#e6e6e6">F4</div>
<div class="a" style="left:376px;top:388px;width:213px;height:21px;background:#404040;"></div>
<div class="t" style="left:412px;top:392px;font-size:11.4px;color:#e6e6e6;">Zellen aus<span class="u">f</span>üllen</div>
<svg class="a" style="left:577px;top:396px;" width="4" height="7" viewBox="0 0 4 7"><path d="M0 0l4 3.5-4 3.5z" fill="#d8d8d8"/></svg>
<div class="t" style="left:412px;top:414px;font-size:11.4px;color:#e6e6e6;"><span class="u">B</span>enannte Bereiche</div>
<svg class="a" style="left:577px;top:418px;" width="4" height="7" viewBox="0 0 4 7"><path d="M0 0l4 3.5-4 3.5z" fill="#d8d8d8"/></svg>
<div class="t" style="left:412px;top:435px;font-size:11.4px;color:#e6e6e6;"><span class="u">K</span>ommentare</div>
<svg class="a" style="left:577px;top:439px;" width="4" height="7" viewBox="0 0 4 7"><path d="M0 0l4 3.5-4 3.5z" fill="#d8d8d8"/></svg>
<svg class="a" style="left:383px;top:434px;" width="16" height="16" viewBox="0 0 16 16"><path d="M1 1h15v11H7l-4 4v-4H1z" fill="none" stroke="#d0d0d0" stroke-width="1.3"/></svg>
<div class="a" style="left:406px;top:454px;width:182px;height:1px;background:#4a4a4a;"></div>
<div class="t" style="left:412px;top:460px;font-size:11.4px;color:#e6e6e6;">Tabelle <span class="u">u</span>mbenennen...</div>
<div class="t" style="left:412px;top:481px;font-size:11.4px;color:#8a8a8a;">Tabelle au<span class="u">s</span>blenden</div>
<div class="t" style="left:412px;top:502px;font-size:11.4px;color:#8a8a8a;">Tabelle einblen<span class="u">d</span>en...</div>
<div class="a" style="left:406px;top:521px;width:182px;height:1px;background:#4a4a4a;"></div>
<div class="t" style="left:412px;top:527px;font-size:11.4px;color:#e6e6e6;">Tabelle verschieben/k<span class="u">o</span>pieren...</div>
<svg class="a" style="left:383px;top:526px;" width="16" height="16" viewBox="0 0 16 16"><path d="M4 1h10v14H4z" fill="none" stroke="#b8b8b8" stroke-width="1.2"/><path d="M4 5h10M4 9h10M9 1v14" stroke="#b8b8b8" stroke-width="1.2"/><path d="M0 9h2" stroke="#b8b8b8" stroke-width="1"/></svg>
<div class="t" style="left:412px;top:548px;font-size:11.4px;color:#e6e6e6;">Tabelle...</div>
<svg class="a" style="left:383px;top:547px;" width="16" height="16" viewBox="0 0 16 16"><path d="M1 1h12v14H1z" fill="none" stroke="#b8b8b8" stroke-width="1.2"/><path d="M1 5h12M7 1v14" stroke="#b8b8b8" stroke-width="1.2"/></svg>
<div class="a" style="left:589px;top:384px;width:159px;height:152px;background:#2b2b2b;border:1px solid #7c7c7c"></div>
<div class="a" style="left:591px;top:386px;width:155px;height:21px;background:#404040;"></div>
<div class="t" style="left:625.6px;top:390px;font-size:11.4px;color:#e6e6e6;">Nach <span class="u">u</span>nten</div>
<div class="t" style="left:694px;top:390px;font-size:11.4px;color:#e6e6e6;">Strg+D</div>
<svg class="a" style="left:597px;top:389px;" width="16" height="16" viewBox="0 0 16 16"><rect x="0.5" y="0.5" width="14" height="15" fill="#1e1e1e" stroke="#b8b8b8" stroke-width="1"/><rect x="1" y="1" width="13" height="3.5" fill="#8a8a8a"/><path d="M7.5 5v10M5 12.5l2.5 2.5 2.5-2.5" fill="none" stroke="#5f9fd6" stroke-width="1.3"/></svg>
<div class="t" style="left:625.6px;top:411px;font-size:11.4px;color:#e6e6e6;">Nach <span class="u">r</span>echts</div>
<svg class="a" style="left:597px;top:410px;" width="16" height="16" viewBox="0 0 16 16"><rect x="0.5" y="0.5" width="14" height="15" fill="#1e1e1e" stroke="#b8b8b8" stroke-width="1"/><rect x="1" y="1" width="4" height="14" fill="#8a8a8a"/><path d="M5 8h10M12.5 5.5L15 8l-2.5 2.5" fill="none" stroke="#5f9fd6" stroke-width="1.3"/></svg>
<div class="t" style="left:625.6px;top:433px;font-size:11.4px;color:#e6e6e6;">Nach <span class="u">o</span>ben</div>
<svg class="a" style="left:597px;top:432px;" width="16" height="16" viewBox="0 0 16 16"><rect x="0.5" y="0.5" width="14" height="15" fill="#1e1e1e" stroke="#b8b8b8" stroke-width="1"/><rect x="1" y="11.5" width="13" height="3.5" fill="#8a8a8a"/><path d="M7.5 11V1M5 3.5L7.5 1 10 3.5" fill="none" stroke="#5f9fd6" stroke-width="1.3"/></svg>
<div class="t" style="left:625.6px;top:454px;font-size:11.4px;color:#e6e6e6;">Nach <span class="u">l</span>inks</div>
<svg class="a" style="left:597px;top:453px;" width="16" height="16" viewBox="0 0 16 16"><rect x="0.5" y="0.5" width="14" height="15" fill="#1e1e1e" stroke="#b8b8b8" stroke-width="1"/><rect x="10" y="1" width="4" height="14" fill="#8a8a8a"/><path d="M10 8H0M2.5 5.5L0 8l2.5 2.5" fill="none" stroke="#5f9fd6" stroke-width="1.3"/></svg>
<div class="t" style="left:625.6px;top:476px;font-size:11.4px;color:#8a8a8a;"><span class="u">T</span>abellen...</div>
<div class="t" style="left:625.6px;top:497px;font-size:11.4px;color:#e6e6e6;">Mit Rei<span class="u">h</span>en...</div>
<div class="t" style="left:625.6px;top:518px;font-size:11.4px;color:#e6e6e6;"><span class="u">M</span>it Zufallszahlen...</div>
</div></body></html>
